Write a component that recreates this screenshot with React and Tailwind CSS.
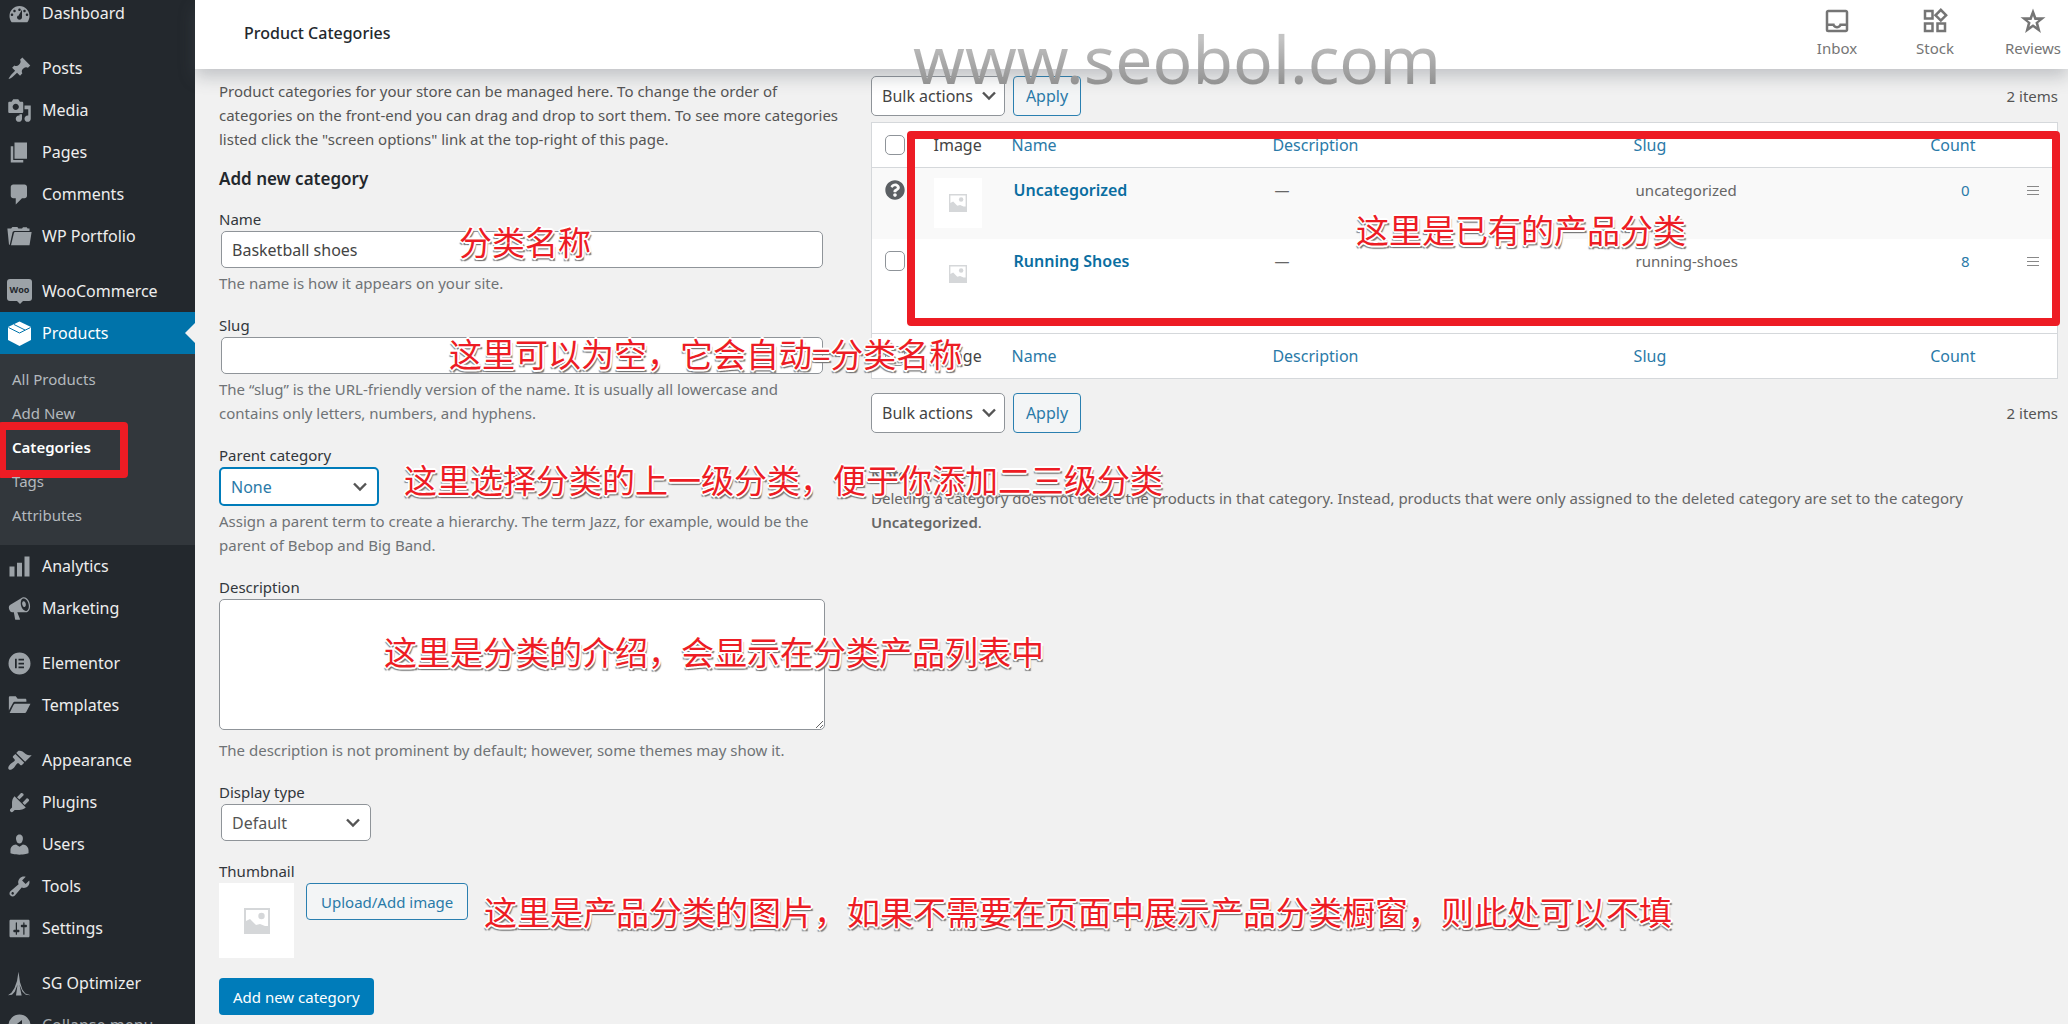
import { useState } from "react";
import { MdOutlineInbox, MdOutlineWidgets } from "react-icons/md";
import { FaQuestionCircle } from "react-icons/fa";

const icons = {
  dashboard:
    "M3.76 17h12.48c1.1-1.37 1.76-3.11 1.76-5 0-4.42-3.58-8-8-8s-8 3.58-8 8c0 1.89.66 3.63 1.76 5zM10 6c.55 0 1 .45 1 1s-.45 1-1 1-1-.45-1-1 .45-1 1-1zM6 7c.55 0 1 .45 1 1s-.45 1-1 1-1-.45-1-1 .45-1 1-1zm8 0c.55 0 1 .45 1 1s-.45 1-1 1-1-.45-1-1 .45-1 1-1zm-5.37 5.55L12 7v6c0 1.1-.9 2-2 2s-2-.9-2-2c0-.57.24-1.08.63-1.45zM4 10c.55 0 1 .45 1 1s-.45 1-1 1-1-.45-1-1 .45-1 1-1zm12 0c.55 0 1 .45 1 1s-.45 1-1 1-1-.45-1-1 .45-1 1-1z",
  post: "M10.44 3.02l1.82-1.82 6.36 6.35-1.83 1.82c-1.05-.68-2.48-.57-3.41.36l-.75.75c-.92.93-1.04 2.35-.35 3.41l-1.83 1.82-2.41-2.41-2.8 2.79c-.42.42-3.38 2.71-3.8 2.29s1.86-3.39 2.28-3.81l2.79-2.79L4.1 9.36l1.83-1.82c1.05.69 2.48.57 3.4-.36l.75-.75c.93-.92 1.05-2.35.36-3.41z",
  media:
    "M13 11V4c0-.55-.45-1-1-1h-1.67L9 1H5L3.67 3H2c-.55 0-1 .45-1 1v7c0 .55.45 1 1 1h10c.55 0 1-.45 1-1zM7 4.5c1.38 0 2.5 1.12 2.5 2.5S8.38 9.5 7 9.5 4.5 8.38 4.5 7 5.62 4.5 7 4.5zM14 6h5v10.5c0 1.38-1.12 2.5-2.5 2.5S14 17.88 14 16.5s1.12-2.5 2.5-2.5c.17 0 .34.02.5.05V9h-3V6zm-4 8.05V13h2v3.5c0 1.38-1.12 2.5-2.5 2.5S7 17.88 7 16.5 8.12 14 9.5 14c.17 0 .34.02.5.05z",
  page: "M6 15V2h10v13H6zm-1 1h8v2H3V5h2v11z",
  comments:
    "M5 2h9c1.1 0 2 .9 2 2v7c0 1.1-.9 2-2 2h-2l-5 5v-5H5c-1.1 0-2-.9-2-2V4c0-1.1.9-2 2-2z",
  portfolio:
    "M.3 3.5h3l1-1.2h4l.8 1.200H12l.8-1h3l.7 1H18v2H6.200c-1 0-1.500.4-1.800 1.200L2.200 16.500H1.600zM6.400 6.300h13.300L18 17H3.200l2.400-10c.1-.4.4-.7.8-.7z",
  chart: "M18 18V2h-4v16h4zm-6 0V7H8v11h4zm-6 0v-8H2v8h4z",
  megaphone:
    "M18.15 5.94c.46 1.62.38 3.22-.02 4.48-.42 1.28-1.26 2.18-2.3 2.48-.16.06-.26.06-.4.06-.06.02-.12.02-.18.02-.06.02-.14.02-.22.02h-6.8l2.22 5.5c.02.14-.06.26-.14.34-.08.1-.24.16-.34.16H6.95c-.1 0-.26-.06-.34-.16-.08-.08-.16-.2-.14-.34l-1-5.5H4.25l-.02-.02c-.5.06-1.08-.18-1.54-.62s-.88-1.08-1.06-1.88c-.24-.8-.2-1.56-.02-2.2.18-.62.58-1.08 1.06-1.3l.02-.02 9-5.4c.1-.06.18-.1.24-.16.06-.04.14-.08.24-.12.16-.08.28-.12.5-.18 1.04-.3 2.24.1 3.22.98s1.84 2.24 2.26 3.86zm-2.58 5.98h-.02c.4-.1.74-.34 1.04-.7.58-.7.86-1.76.86-3.04 0-.64-.1-1.3-.28-1.98-.34-1.36-1.02-2.5-1.78-3.24s-1.68-1.1-2.46-.88c-.82.22-1.4.96-1.7 2-.32 1.04-.28 2.36.06 3.72.38 1.36 1 2.5 1.8 3.24.78.74 1.62 1.1 2.48.88zm-2.54-7.7c.22-.04.42-.02.62.04.38.16.76.48 1.02 1s.42 1.2.42 1.78c0 .3-.04.56-.12.8-.18.48-.44.84-.86.94-.34.1-.8-.06-1.14-.4s-.64-.86-.78-1.5c-.18-.62-.12-1.24.02-1.72s.48-.84.82-.94z",
  elementor:
    "M10 1.2a8.8 8.8 0 1 0 0 17.6 8.8 8.8 0 0 0 0-17.6zM6.4 6.2h1.4v7.600H6.400zM9.200 6.200h4.400v1.400H9.200zM9.200 9.300h4.400v1.400H9.200zM9.200 12.400h4.400v1.400H9.200z",
  templates:
    "M1.500 14V3.500c0-.6.4-1 1-1h4.500l1.500 2h6c.6 0 1 .4 1 1v1.500H6.500c-.8 0-1.400.4-1.700 1zM2.100 16l3-6.300c.3-.7.8-1.200 1.600-1.200h12.100l-3.300 6.400c-.3.7-.8 1.100-1.600 1.100z",
  appearance:
    "M14.48 11.06L7.41 3.99l1.5-1.5c.5-.56 2.3-.47 3.51.32 1.21.8 1.43 1.28 2.91 2.1 1.18.64 2.45 1.26 4.45.85zm-.71.71L6.7 4.7 4.93 6.47c-.39.39-.39 1.02 0 1.41l1.06 1.06c.39.39.39 1.03 0 1.42-.6.6-1.43 1.11-2.21 1.69-.35.26-.7.53-1.01.84C1.43 14.23.4 16.08 1.4 17.07c.99 1 2.84-.03 4.18-1.36.31-.31.58-.66.85-1.02.57-.78 1.08-1.61 1.69-2.21.39-.39 1.02-.39 1.41 0l1.06 1.06c.39.39 1.02.39 1.41 0z",
  plugins:
    "M13.11 4.36L9.87 7.6 8 5.73l3.24-3.24c.35-.34 1.05-.2 1.56.32.52.51.66 1.21.31 1.55zm-8 1.77l.91-1.12 9.01 9.01-1.19.84c-.71.71-2.63 1.16-3.82 1.16H6.14L4.9 17.26c-.59.59-1.54.59-2.12 0-.59-.58-.59-1.53 0-2.12l1.24-1.24v-3.88c0-1.13.4-3.19 1.09-3.89zm7.26 3.97l3.24-3.24c.34-.35 1.04-.21 1.55.31.52.51.66 1.21.31 1.55l-3.24 3.25z",
  users:
    "M10 9.25c-2.27 0-2.73-3.44-2.73-3.44C7 4.02 7.82 2 9.97 2c2.16 0 2.98 2.02 2.71 3.81 0 0-.41 3.44-2.68 3.44zm0 2.57L12.72 10c2.39 0 4.52 2.33 4.52 4.53v2.49s-3.65 1.13-7.24 1.13c-3.65 0-7.24-1.13-7.24-1.13v-2.49c0-2.25 1.94-4.48 4.47-4.48z",
  tools:
    "M16.68 9.77c-1.34 1.34-3.3 1.67-4.95.99l-5.41 6.52c-.99.99-2.59.99-3.58 0s-.99-2.59 0-3.57l6.52-5.42c-.68-1.65-.35-3.61.99-4.95 1.28-1.28 3.12-1.62 4.72-1.06l-2.89 2.89 2.82 2.82 2.86-2.87c.53 1.58.18 3.39-1.08 4.65zM3.81 16.21c.4.39 1.04.39 1.43 0 .4-.4.4-1.04 0-1.43-.39-.4-1.03-.4-1.43 0-.39.39-.39 1.03 0 1.43z",
  settings:
    "M18 16V4c0-.55-.45-1-1-1H3c-.55 0-1 .45-1 1v12c0 .55.45 1 1 1h14c.55 0 1-.45 1-1zM8 11h1c.55 0 1 .45 1 1s-.45 1-1 1H8v1.5c0 .28-.22.5-.5.5s-.5-.22-.5-.5V13H6c-.55 0-1-.45-1-1s.45-1 1-1h1V5.5c0-.28.22-.5.5-.5s.5.22.5.5V11zm5-2h-1c-.55 0-1-.45-1-1s.45-1 1-1h1V5.5c0-.28.22-.5.5-.5s.5.22.5.5V7h1c.55 0 1 .45 1 1s-.45 1-1 1h-1v5.5c0 .28-.22.5-.5.5s-.5-.22-.5-.5V9z",
  optimizer:
    "M9.2.5L10.400 9l2 6 2.300 3 4.300 1.300-4-.3-2.600-2.500L10 11l1.700 8.500H7.200L8.400 11l-2.200 5.500L4 19 .8 19.300l2.700-2L6 13.500 8 8z",
  collapse: "M10 1.2a8.8 8.8 0 1 0 0 17.6 8.8 8.8 0 0 0 0-17.6zM12 5.5v9L6.500 10z",
};

const menu = [
  [{ icon: "dashboard", label: "Dashboard" }],
  [
    { icon: "post", label: "Posts" },
    { icon: "media", label: "Media" },
    { icon: "page", label: "Pages" },
    { icon: "comments", label: "Comments" },
    { icon: "portfolio", label: "WP Portfolio" },
  ],
  [
    { icon: "woo", label: "WooCommerce" },
    { icon: "products", label: "Products", active: true },
    { icon: "chart", label: "Analytics" },
    { icon: "megaphone", label: "Marketing" },
  ],
  [
    { icon: "elementor", label: "Elementor" },
    { icon: "templates", label: "Templates" },
  ],
  [
    { icon: "appearance", label: "Appearance" },
    { icon: "plugins", label: "Plugins" },
    { icon: "users", label: "Users" },
    { icon: "tools", label: "Tools" },
    { icon: "settings", label: "Settings" },
  ],
  [
    { icon: "optimizer", label: "SG Optimizer" },
    { icon: "collapse", label: "Collapse menu", muted: true },
  ],
];

const submenu = ["All Products", "Add New", "Categories", "Tags", "Attributes"];

const rows = [
  { name: "Uncategorized", slug: "uncategorized", count: 0, locked: true },
  { name: "Running Shoes", slug: "running-shoes", count: 8 },
];

function MenuIcon({ name }) {
  if (name === "woo") {
    return (
      <span className="flex h-[25px] w-[25px] flex-col items-center">
        <span className="flex h-[22px] w-[25px] items-center justify-center rounded-[3px] bg-[#9ca2a7] text-[9px] font-bold leading-none text-[#23282d]">
          Woo
        </span>
        <span className="border-x-3 border-t-3 border-x-transparent border-t-[#9ca2a7]" />
      </span>
    );
  }
  if (name === "products") {
    return (
      <svg viewBox="0 0 25 25" className="size-[25px] shrink-0">
        <path fill="#fff" d="M12.500 0.500L24 6v13l-11.500 6L1 19V6z" />
        <path
          fill="none"
          stroke="#0073aa"
          strokeWidth="1"
          d="M1.500 6.500l11 5.500L23.500 6.500M7 3.500l11 5.500"
        />
      </svg>
    );
  }
  return (
    <svg
      viewBox="0 0 20 20"
      fill="currentColor"
      fillRule="evenodd"
      className="size-[25px] shrink-0"
    >
      <path d={icons[name]} />
    </svg>
  );
}

function Submenu() {
  return (
    <ul className="h-[191px] bg-[#32373c] pt-2 text-[15px] text-[#b4b9be]">
      {submenu.map((label) => (
        <li key={label} className="relative">
          <a
            href="#"
            className={
              label === "Categories"
                ? "flex h-[34px] items-center px-3 font-semibold text-white"
                : "flex h-[34px] items-center px-3"
            }
          >
            {label}
          </a>
          {label === "Categories" && (
            <span className="pointer-events-none absolute -left-[2px] -top-2 h-[56px] w-[130px] rounded-sm border-8 border-[#ed1c24]" />
          )}
        </li>
      ))}
    </ul>
  );
}

function Sidebar() {
  return (
    <nav className="w-[195px] shrink-0 bg-[#23282d]">
      <div className="-mt-2 flex flex-col gap-[13px]">
        {menu.map((group, i) => (
          <ul key={i}>
            {group.map((item) => (
              <li key={item.label}>
                <a
                  href="#"
                  className={`relative flex h-[42px] items-center gap-2.5 pl-[7px] text-base ${
                    item.active
                      ? "bg-[#0073aa] text-white"
                      : item.muted
                        ? "text-[#a0a5aa]"
                        : "text-[#eee]"
                  }`}
                >
                  <span className={item.active ? "text-white" : "text-[#9ca2a7]"}>
                    <MenuIcon name={item.icon} />
                  </span>
                  {item.label}
                  {item.active && (
                    <span className="absolute right-0 top-[11px] border-y-10 border-r-10 border-y-transparent border-r-[#f1f1f1]" />
                  )}
                </a>
                {item.active && <Submenu />}
              </li>
            ))}
          </ul>
        ))}
      </div>
    </nav>
  );
}

function Chevron({ className }) {
  return (
    <svg viewBox="0 0 20 20" className={`pointer-events-none absolute size-5 ${className}`}>
      <path fill="none" stroke="#555" strokeWidth="2.4" d="M4 6.500l6 6 6-6" />
    </svg>
  );
}

// Red callout that floats over the page
function Note({ className, children }) {
  return (
    <span
      className={`pointer-events-none absolute z-20 whitespace-nowrap font-['Noto_Sans_CJK_SC',sans-serif] text-[33px] leading-[40px] text-[#ed1c24] [text-shadow:-2px_0_0_#fff,2px_0_0_#fff,0_-2px_0_#fff,0_2px_0_#fff,-1px_-1px_0_#fff,1px_-1px_0_#fff,-1px_1px_0_#fff,1px_1px_0_#fff,2px_3px_1px_#777,-1px_3px_1px_#888] ${className}`}
    >
      {children}
    </span>
  );
}

function Placeholder({ className }) {
  return (
    <svg viewBox="0 0 26 26" className={className}>
      <path fill="#d5d7d9" fillRule="evenodd" d="M0 0h26v26H0zM2 2v11l4-2 6 6 4-1 5 2 3 0V2z" />
      <circle cx="17.500" cy="8" r="3.200" fill="#d5d7d9" />
    </svg>
  );
}

function Field({ id, label, help, children }) {
  return (
    <div>
      <label htmlFor={id} className="block h-6 leading-6 text-[#32373c]">
        {label}
      </label>
      {children}
      {help && <p className="pt-[3px] text-[#6f7376]">{help}</p>}
    </div>
  );
}

function AddForm() {
  const [name, setName] = useState("Basketball shoes");

  return (
    <form className="w-[606px] shrink-0 pt-2.5 text-[15px] leading-6">
      <p className="w-[640px] text-[#555]">
        Product categories for your store can be managed here. To change the order of
        <br />
        categories on the front-end you can drag and drop to sort them. To see more categories
        <br />
        listed click the "screen options" link at the top-right of this page.
      </p>
      <h2 className="mt-4 text-[17px] font-semibold leading-6 text-[#23282d]">
        Add new category
      </h2>

      <div className="mt-4 flex flex-col gap-[18px]">
        <Field id="name" label="Name" help="The name is how it appears on your site.">
          <div className="relative px-0.5">
            <input
              id="name"
              value={name}
              onChange={(e) => setName(e.target.value)}
              className="block h-[37px] w-full rounded-[5px] border border-[#8f9499] bg-white px-2.5 text-base text-[#444]"
            />
            <Note className="-top-2.5 left-[240px]">分类名称</Note>
          </div>
        </Field>

        <Field
          id="slug"
          label="Slug"
          help={
            <>
              The “slug” is the URL-friendly version of the name. It is usually all lowercase and
              <br />
              contains only letters, numbers, and hyphens.
            </>
          }
        >
          <div className="relative px-0.5">
            <input
              id="slug"
              className="block h-[37px] w-full rounded-[5px] border border-[#8f9499] bg-white px-2.5"
            />
            <Note className="-top-1 left-[230px]">这里可以为空，它会自动=分类名称</Note>
          </div>
        </Field>

        <Field
          id="parent"
          label="Parent category"
          help={
            <>
              Assign a parent term to create a hierarchy. The term Jazz, for example, would be the
              <br />
              parent of Bebop and Big Band.
            </>
          }
        >
          <div className="relative">
            <select
              id="parent"
              className="block h-[39px] w-[160px] appearance-none rounded-[5px] border-2 border-[#007cba] bg-white px-2.5 text-base text-[#2a7aa8]"
            >
              <option>None</option>
            </select>
            <Chevron className="left-[131px] top-2.5" />
            <Note className="-top-2 left-[185px]">
              这里选择分类的上一级分类，便于你添加二三级分类
            </Note>
          </div>
        </Field>

        <Field
          id="description"
          label="Description"
          help="The description is not prominent by default; however, some themes may show it."
        >
          <div className="relative pb-[5px]">
            <textarea
              id="description"
              className="block h-[131px] w-full rounded-[5px] border border-[#8f9499] bg-white p-2"
            />
            <Note className="left-[165px] top-8">这里是分类的介绍，会显示在分类产品列表中</Note>
          </div>
        </Field>

        <Field id="display" label="Display type">
          <div className="relative px-0.5">
            <select
              id="display"
              className="block h-[37px] w-[150px] appearance-none rounded-[5px] border border-[#8f9499] bg-white px-2.5 text-base text-[#555]"
            >
              <option>Default</option>
            </select>
            <Chevron className="left-[124px] top-[9px]" />
          </div>
        </Field>

        <Field id="thumbnail" label="Thumbnail">
          <div className="relative flex items-start gap-3">
            <div className="flex size-[75px] items-center justify-center bg-white">
              <Placeholder className="size-[26px]" />
            </div>
            <button
              id="thumbnail"
              type="button"
              className="h-[37px] rounded border border-[#2a7fb0] bg-[#f3f5f6] px-3.5 text-[#2a7aa8]"
            >
              Upload/Add image
            </button>
            <Note className="left-[265px] top-2">
              这里是产品分类的图片，如果不需要在页面中展示产品分类橱窗，则此处可以不填
            </Note>
          </div>
        </Field>
      </div>

      <button type="button" className="mt-5 h-[37px] rounded bg-[#007cba] px-3.5 text-white">
        Add new category
      </button>
    </form>
  );
}

function BulkBar({ id }) {
  return (
    <div className="flex items-center">
      <div className="relative">
        <select
          id={id}
          aria-label="Bulk actions"
          className="block h-10 w-[134px] appearance-none rounded-[5px] border border-[#8f9499] bg-white px-2.5 text-base text-[#444]"
        >
          <option>Bulk actions</option>
        </select>
        <Chevron className="right-1.5 top-2.5" />
      </div>
      <button
        type="button"
        className="ml-2 h-10 w-[68px] rounded border border-[#2a7fb0] bg-[#f3f5f6] text-base text-[#2a7aa8]"
      >
        Apply
      </button>
      <span className="ml-auto text-[#555]">2 items</span>
    </div>
  );
}

function Check({ label }) {
  return (
    <input
      type="checkbox"
      aria-label={label}
      className="block size-5 appearance-none rounded-[5px] border border-[#8f9499] bg-white"
    />
  );
}

function HeadRow({ label }) {
  return (
    <tr className="h-[45px] text-left text-base">
      <td className="pl-[13px]">
        <Check label={label} />
      </td>
      <th className="pl-2.5 font-normal text-[#444]">Image</th>
      <th className="pl-2.5 font-normal">
        <a href="#">Name</a>
      </th>
      <th className="pl-2.5 font-normal">
        <a href="#">Description</a>
      </th>
      <th className="pl-2.5 font-normal">
        <a href="#">Slug</a>
      </th>
      <th className="pr-2.5 text-right font-normal">
        <a href="#">Count</a>
      </th>
      <th />
    </tr>
  );
}

function CategoryTable() {
  return (
    <div className="relative mt-1.5">
      <table className="w-full table-fixed border border-[#d5d8db] bg-white text-[15px] leading-6 text-[#2a7aa8]">
        <colgroup>
          <col className="w-[52px]" />
          <col className="w-[78px]" />
          <col className="w-[22%]" />
          <col />
          <col className="w-[22%]" />
          <col className="w-[101px]" />
          <col className="w-[72px]" />
        </colgroup>
        <thead className="border-b border-[#d5d8db]">
          <HeadRow label="Select all" />
        </thead>
        <tbody>
          {rows.map((row) => (
            <tr
              key={row.slug}
              className={row.locked ? "h-[71px] bg-[#f9f9f9] align-top" : "h-[95px] align-top"}
            >
              <td className="pl-[13px] pt-3">
                {row.locked ? (
                  <FaQuestionCircle className="size-5 text-[#5b5f63]" />
                ) : (
                  <Check label={row.name} />
                )}
              </td>
              <td className="pl-2.5 pt-2.5">
                <div className="flex h-[50px] w-12 items-center justify-center bg-white">
                  <Placeholder className="size-[18px]" />
                </div>
              </td>
              <td className="pl-3 pt-2.5 text-base font-semibold text-[#0a6ea1]">
                <a href="#">{row.name}</a>
              </td>
              <td className="pl-3 pt-2.5 text-[#666]">—</td>
              <td className="pl-3 pt-2.5 text-[#666]">{row.slug}</td>
              <td className="pr-4 pt-2.5 text-right">
                <a href="#">{row.count}</a>
              </td>
              <td className="pt-[18px]">
                <div className="ml-auto mr-[18px] h-[9px] w-3 border-y border-[#888] pt-[3px]">
                  <div className="h-px bg-[#888]" />
                </div>
              </td>
            </tr>
          ))}
        </tbody>
        <tfoot className="border-t border-[#d5d8db]">
          <HeadRow label="Select all rows" />
        </tfoot>
      </table>
      <span className="pointer-events-none absolute -right-[2px] left-9 top-[9px] h-[195px] rounded-sm border-8 border-[#ed1c24]" />
      <Note className="left-[485px] top-[87px]">这里是已有的产品分类</Note>
    </div>
  );
}

function StarIcon({ className }) {
  return (
    <svg viewBox="0 0 24 24" fill="currentColor" fillRule="evenodd" className={className}>
      <path d="M12 2l2.600 7H22l-5.800 4.600L18.300 21.500 12 17l-6.300 4.500 2.100-7.900L2 9h7.400zM12 8l-1.200 3.200H7.600l2.500 2-1 3.300 2.900-2 2.900 2-1-3.300 2.500-2h-3.200z" />
    </svg>
  );
}

function Tab({ icon: Icon, label }) {
  return (
    <button type="button" className="flex w-[98px] flex-col items-center text-[#757575]">
      <Icon className="size-[30px]" />
      <span className="text-[15px] leading-6">{label}</span>
    </button>
  );
}

export default function App() {
  return (
    <div className="flex h-screen overflow-hidden bg-[#f1f1f1] font-['Noto_Sans','Noto_Sans_CJK_SC',sans-serif]">
      <Sidebar />
      <div className="flex min-w-0 flex-1 flex-col">
        <header className="relative z-10 flex h-[69px] shrink-0 items-start justify-between bg-white pl-[49px] shadow-[0_8px_16px_0_rgba(85,93,102,0.3)]">
          <h1 className="pt-[21px] text-base font-medium leading-6 text-[#23282d]">
            Product Categories
          </h1>
          <div className="-mr-3.5 flex pt-1.5">
            <Tab icon={MdOutlineInbox} label="Inbox" />
            <Tab icon={MdOutlineWidgets} label="Stock" />
            <Tab icon={StarIcon} label="Reviews" />
          </div>
          <span className="pointer-events-none absolute left-[718px] top-[9px] bg-linear-to-b from-[#c4c4c4] from-30% to-[#8f8f8f] to-80% bg-clip-text text-[66px] leading-[98px] text-transparent">
            www.seobol.com
          </span>
        </header>
        <main className="flex flex-1 gap-[46px] pl-6 pr-2.5">
          <AddForm />
          <section className="min-w-0 flex-1 pt-[7px] text-[15px] leading-6">
            <BulkBar id="bulk-top" />
            <CategoryTable />
            <div className="mt-3.5">
              <BulkBar id="bulk-bottom" />
            </div>
            <div className="mt-[29px] text-[#666]">
              <strong className="block font-semibold">Note:</strong>
              <p>
                Deleting a category does not delete the products in that category. Instead, products
                that were only assigned to the deleted category are set to the category
                <br />
                <strong className="font-semibold">Uncategorized</strong>.
              </p>
            </div>
          </section>
        </main>
      </div>
    </div>
  );
}
